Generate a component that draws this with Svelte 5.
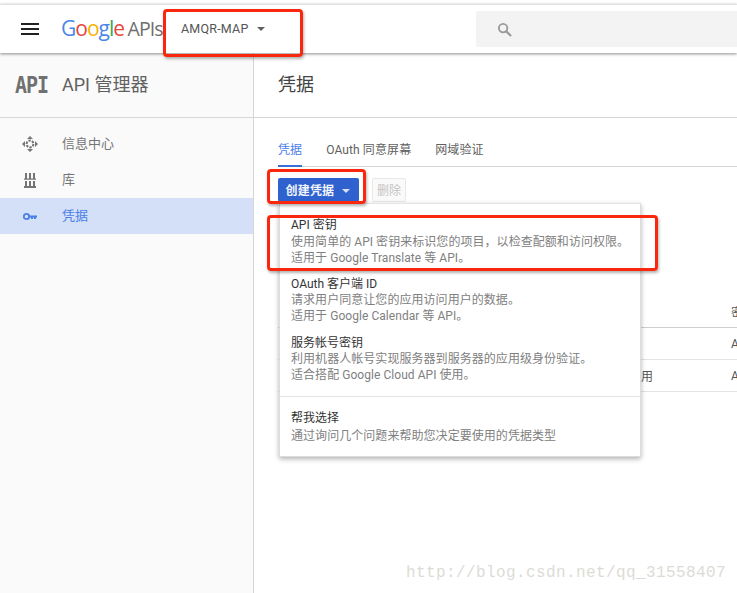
<script>
	const nav = [
		{ label: '信息中心', icon: 'dash' },
		{ label: '库', icon: 'lib' },
		{ label: '凭据', icon: 'key', active: true }
	];
	const tabs = ['凭据', 'OAuth 同意屏幕', '网域验证'];
	const menu = [
		{ title: 'API 密钥', lines: ['使用简单的 API 密钥来标识您的项目，以检查配额和访问权限。', '适用于 Google Translate 等 API。'] },
		{ title: 'OAuth 客户端 ID', lines: ['请求用户同意让您的应用访问用户的数据。', '适用于 Google Calendar 等 API。'] },
		{ title: '服务帐号密钥', lines: ['利用机器人帐号实现服务器到服务器的应用级身份验证。', '适合搭配 Google Cloud API 使用。'] }
	];
</script>

<div class="page">
	<header class="topbar">
		<button class="burger" type="button" aria-label="菜单"><span></span><span></span><span></span></button>
		<div class="logo">
			<span class="g-blue">G</span><span class="g-red">o</span><span class="g-yellow">o</span><span class="g-blue">g</span><span class="g-green">l</span><span class="g-red">e</span>
			<span class="apis">APIs</span>
		</div>
		<div class="project">AMQR-MAP <i class="caret"></i></div>
		<div class="search">
			<svg width="15" height="15" viewBox="0 0 16 16" fill="none" stroke="#9a9a9a" stroke-width="2">
				<circle cx="6.500" cy="6.500" r="4.500" />
				<path d="M10 10l5 5" stroke-width="2.400" />
			</svg>
		</div>
	</header>

	<div class="body">
		<aside class="side">
			<div class="side-head">
				<span class="api-mark">API</span>
				<span class="side-title">API 管理器</span>
			</div>
			<nav class="nav">
				{#each nav as item}
					<div class="nav-item" class:active={item.active}>
						<span class="nav-icon">
							{#if item.icon === 'dash'}
								<svg width="16" height="16" viewBox="0 0 16 16" fill="#757575">
									<path d="M8 0l3 3H5zM8 16l-3-3h6zM0 8l3-3v6zM16 8l-3 3V5z" />
									<circle cx="8" cy="8" r="3.400" fill="none" stroke="#757575" stroke-width="2" stroke-dasharray="2.400 1.100" />
								</svg>
							{:else if item.icon === 'lib'}
								<svg class="lib" width="12" height="15" viewBox="0 0 12 15" fill="#757575">
									<path d="M1 0h2v5.500H1zM5 0h2v5.500H5zM9 0h2v5.500H9zM0 5.500h12v1.200H0zM1 8h2v5H1zM5 8h2v5H5zM9 8h2v5H9zM0 13h12v2H0z" />
								</svg>
							{:else}
								<svg class="key" width="14" height="9" viewBox="0 0 14 9" fill="none">
									<circle cx="3.500" cy="4.500" r="2.700" stroke="#4a7ee8" stroke-width="1.800" />
									<path d="M6 3.500h8v2h-1V7h-2V5.500h-1V7H8V5.500H6z" fill="#4a7ee8" />
								</svg>
							{/if}
						</span>
						<span class="nav-label">{item.label}</span>
					</div>
				{/each}
			</nav>
		</aside>

		<main class="main">
			<div class="main-head"><h1>凭据</h1></div>
			<div class="content">
				<div class="tabs">
					{#each tabs as tab, i}
						<span class="tab" class:on={i === 0}>{tab}</span>
					{/each}
				</div>
				<div class="actions">
					<button class="create" type="button"><span>创建凭据</span> <i class="caret white"></i></button>
					<button class="delete" type="button" disabled>删除</button>
				</div>
				<div class="table">
					<div class="th"><span>密</span></div>
					<div class="tr"><span>A</span></div>
					<div class="tr"><em>用</em><span>A</span></div>
				</div>

				<div class="menu">
					{#each menu as m}
						<div class="menu-item">
							<div class="m-title">{m.title}</div>
							{#each m.lines as line}
								<div class="m-line">{line}</div>
							{/each}
						</div>
					{/each}
					<div class="menu-foot">
						<div class="m-title">帮我选择</div>
						<div class="m-line">通过询问几个问题来帮助您决定要使用的凭据类型</div>
					</div>
				</div>
			</div>
		</main>
	</div>

	<div class="mark mark-project"></div>
	<div class="mark mark-create"></div>
	<div class="mark mark-api"></div>
	<div class="watermark">http://blog.csdn.net/qq_31558407</div>
</div>

<style>
	:global(body) {
		margin: 0;
		background: #fff;
	}
	.page {
		position: relative;
		width: 737px;
		height: 593px;
		overflow: hidden;
		display: flex;
		flex-direction: column;
		padding-top: 4px;
		box-sizing: border-box;
		font-family: Roboto, "Noto Sans CJK SC", sans-serif;
		color: #444;
	}
	.page::before {
		content: '';
		position: absolute;
		top: 4px;
		left: 0;
		right: 0;
		height: 1px;
		background: #e2e2e2;
		z-index: 3;
	}
	.topbar {
		position: relative;
		z-index: 2;
		flex: none;
		height: 49px;
		display: flex;
		align-items: center;
		background: #fff;
		box-shadow: 0 1px 3px rgba(0, 0, 0, 0.45);
	}
	.burger {
		display: flex;
		flex-direction: column;
		gap: 3px;
		width: 18px;
		margin: 0 0 0 21px;
		padding: 0;
		border: 0;
		background: none;
	}
	.burger span {
		display: block;
		height: 2px;
		background: #212121;
	}
	.logo {
		margin-left: 22px;
		font-family: "Open Sans", sans-serif;
		font-size: 21px;
		letter-spacing: -1px;
		white-space: nowrap;
		width: 104px;
		line-height: 28px;
		flex: none;
	}
	.g-blue { color: #4a86e8; }
	.g-red { color: #e8453c; }
	.g-yellow { color: #f4b400; }
	.g-green { color: #34a853; }
	.apis {
		color: #6e6e6e;
		letter-spacing: -0.9px;
		font-size: 19.5px;
		margin-left: -1px;
	}
	.project {
		flex: none;
		width: 143px;
		padding-left: 16px;
		box-sizing: border-box;
		font-size: 12.5px;
		color: #555;
		letter-spacing: 0.2px;
		white-space: nowrap;
	}
	.caret {
		display: inline-block;
		width: 0;
		height: 0;
		margin-left: 5px;
		vertical-align: 2px;
		border: 4px solid transparent;
		border-bottom: 0;
		border-top-color: #616161;
	}
	.caret.white {
		border-top-color: #d7e2f8;
		margin-left: 4px;
	}
	.search {
		flex: 1;
		height: 36px;
		margin-left: 168px;
		margin-top: 1px;
		display: flex;
		align-items: center;
		padding-left: 21px;
		background: #f3f3f3;
		border-radius: 2px 0 0 2px;
	}
	.body {
		flex: 1;
		display: flex;
		min-height: 0;
	}
	.side {
		flex: none;
		width: 253px;
		background: #fafafa;
		border-right: 1px solid #d6d6d6;
	}
	.side-head {
		height: 64px;
		display: flex;
		align-items: center;
		padding-left: 15px;
		border-bottom: 1px solid #d6d6d6;
	}
	.api-mark {
		width: 47px;
		font-family: "DejaVu Sans Mono", monospace;
		font-weight: 700;
		font-size: 20px;
		letter-spacing: -1px;
		color: #707070;
		transform: scaleY(1.12);
	}
	.side-title {
		font-size: 18px;
		color: #616161;
		padding-bottom: 4px;
	}
	.nav {
		padding-top: 8px;
	}
	.nav-item {
		height: 36px;
		display: flex;
		align-items: center;
		padding-left: 22px;
		font-size: 13px;
		color: #757575;
	}
	.nav-label {
		padding-bottom: 4px;
	}
	.nav-item.active {
		background: #d3e0f7;
		color: #4a7ee8;
	}
	.nav-icon {
		width: 40px;
		display: flex;
		align-items: center;
	}
	.lib {
		margin-left: 2px;
	}
	.key {
		margin-left: 1px;
	}
	.main {
		flex: 1;
		min-width: 0;
	}
	.main-head {
		height: 64px;
		display: flex;
		align-items: center;
		padding-left: 24px;
		border-bottom: 1px solid #d6d6d6;
	}
	h1 {
		margin: 0;
		font-size: 18px;
		font-weight: 400;
		color: #444;
		padding-bottom: 4px;
	}
	.content {
		position: relative;
		padding-left: 24px;
	}
	.tabs {
		display: flex;
		gap: 24px;
		height: 48px;
		align-items: flex-end;
		border-bottom: 1px solid #d6d6d6;
	}
	.tab {
		height: 27px;
		font-size: 12px;
		letter-spacing: 0.1px;
		color: #616161;
		margin-bottom: -1px;
		box-sizing: border-box;
	}
	.tab.on {
		color: #4a7ee8;
		border-bottom: 2px solid #3b6fd8;
	}
	.actions {
		display: flex;
		gap: 13px;
		margin-top: 11px;
	}
	.create {
		height: 24px;
		width: 81px;
		padding: 0 2px 2px 0;
		border: 0;
		border-radius: 2px;
		background: #2f62cf;
		color: #f2f5fc;
		font: 700 12px Roboto, "Noto Sans CJK SC", sans-serif;
		letter-spacing: 0.2px;
	}
	.delete {
		height: 24px;
		width: 34px;
		padding: 0 0 2px;
		border: 1px solid #e8e8e8;
		border-radius: 2px;
		background: #fafafa;
		color: #c4c4c4;
		font: 12px Roboto, "Noto Sans CJK SC", sans-serif;
	}
	.table {
		margin-top: 94px;
	}
	.th,
	.tr {
		display: flex;
		align-items: center;
		border-bottom: 1px solid #e3e3e3;
		font-size: 12px;
		color: #555;
		height: 31px;
		position: relative;
	}
	.th {
		border-bottom-color: #cfcfcf;
	}
	.th span,
	.tr span {
		position: absolute;
		left: 453px;
	}
	.tr em {
		position: absolute;
		left: 363px;
		font-style: normal;
	}
	.menu {
		position: absolute;
		z-index: 1;
		top: 85px;
		left: 25px;
		width: 362px;
		height: 254px;
		box-sizing: border-box;
		background: #fff;
		border: 1px solid #dcdcdc;
		border-top-color: #e4e4e4;
		box-shadow: 0 2px 5px rgba(0, 0, 0, 0.3);
		padding-top: 13px;
	}
	.menu-item {
		height: 59px;
		padding-left: 11px;
	}
	.menu-item:first-child .m-title {
		margin-bottom: 1px;
	}
	.menu-foot {
		border-top: 1px solid #e3e3e3;
		margin-top: 2px;
		padding: 13px 0 0 11px;
	}
	.menu-foot .m-title {
		margin-bottom: 2px;
	}
	.m-title {
		font-size: 12px;
		line-height: 16px;
		color: #333;
	}
	.m-line {
		font-size: 12px;
		line-height: 16px;
		color: #808080;
		letter-spacing: 0.05px;
		white-space: nowrap;
	}
	.mark {
		position: absolute;
		z-index: 3;
		box-sizing: border-box;
		border: 3px solid #f9270e;
		border-radius: 4px;
		box-shadow: 1px 2px 3px rgba(0, 0, 0, 0.3);
	}
	.mark-project {
		left: 163px;
		top: 9px;
		width: 140px;
		height: 48px;
	}
	.mark-create {
		left: 267px;
		top: 169px;
		width: 99px;
		height: 35px;
	}
	.mark-api {
		left: 267px;
		top: 215px;
		width: 391px;
		height: 56px;
	}
	.watermark {
		position: absolute;
		z-index: 3;
		left: 406px;
		top: 564px;
		font-family: "Liberation Mono", monospace;
		font-size: 16px;
		letter-spacing: 0.4px;
		color: #dcdcd6;
		white-space: nowrap;
	}
</style>
